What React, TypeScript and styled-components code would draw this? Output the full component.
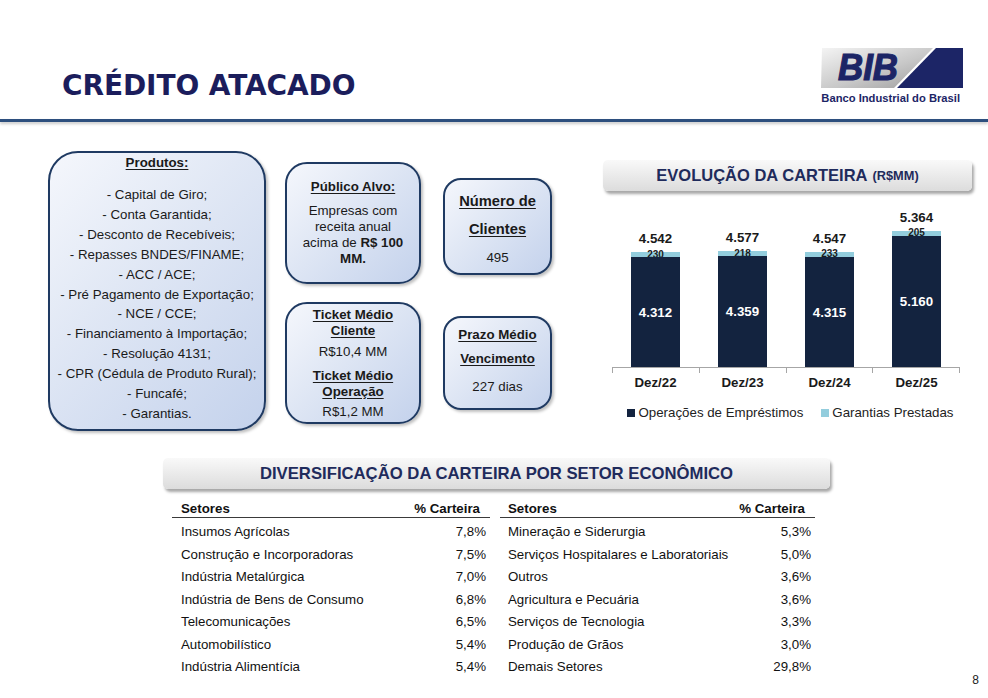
import React from 'react';
import styled, { createGlobalStyle } from 'styled-components';

const GlobalStyle = createGlobalStyle`
  html, body { margin: 0; padding: 0; background: #fff; }
  body { font-family: "Liberation Sans", Arial, sans-serif; color: #111; }
  * { box-sizing: border-box; }
`;

const NAVY = '#1c2566';
const BAR_DARK = '#13233f';
const BAR_LIGHT = '#93cddd';

const Page = styled.div`
  position: relative;
  width: 988px;
  height: 698px;
  overflow: hidden;
  background: #fff;
  display: flex;
  flex-direction: column;
  & > * {
    flex-shrink: 0;
  }
`;

const Header = styled.header`
  height: 119px;
  display: flex;
  align-items: flex-start;
  padding: 0 25px 0 62px;
`;

const Title = styled.h1`
  margin: 68px 0 0;
  font-family: "DejaVu Sans", Verdana, sans-serif;
  font-weight: 700;
  font-size: 28px;
  line-height: 36px;
  letter-spacing: -0.1px;
  color: #1b1d5c;
`;

const Logo = styled.div`
  margin: 48px 0 0 auto;
  width: 142px;
  display: flex;
  flex-direction: column;
  align-items: flex-end;
`;

const LogoTag = styled.div`
  margin-top: 4px;
  margin-right: 3px;
  font-size: 11.2px;
  line-height: 13px;
  font-weight: 700;
  color: ${NAVY};
  white-space: nowrap;
`;

const Divider = styled.div`
  height: 3px;
  background: #2d4f7e;
  box-shadow: 0 2px 3px rgba(0, 0, 0, 0.22);
`;

const MainRow = styled.section`
  display: flex;
  align-items: flex-start;
  padding: 29px 0 0 48px;
`;

const Card = styled.div<{ $w: number; $h: number; $r: number; $pb?: number }>`
  width: ${(p) => p.$w}px;
  height: ${(p) => p.$h}px;
  flex-shrink: 0;
  border-radius: ${(p) => p.$r}px;
  border: 2px solid #1f3a62;
  background: linear-gradient(135deg, #f5f7fc 0%, #e1e8f5 40%, #c4d2ec 100%);
  box-shadow: 2px 2px 3px rgba(0, 0, 0, 0.25);
  color: #1a1a1a;
  text-align: center;
  font-size: 13.3px;
  padding-bottom: ${(p) => p.$pb ?? 0}px;
`;

const ProductsCard = styled(Card)`
  padding-top: 2px;
`;

const CenterCard = styled(Card)`
  display: flex;
  flex-direction: column;
  justify-content: center;
  align-items: center;
`;

const Column = styled.div<{ $ml: number; $mt: number; $gap: number }>`
  display: flex;
  flex-direction: column;
  gap: ${(p) => p.$gap}px;
  margin-left: ${(p) => p.$ml}px;
  margin-top: ${(p) => p.$mt}px;
`;

const Heading = styled.div<{ $size?: number; $lh?: number; $mt?: number }>`
  font-weight: 700;
  text-decoration: underline;
  text-underline-offset: 2px;
  font-size: ${(p) => p.$size ?? 13.3}px;
  line-height: ${(p) => p.$lh ?? 16}px;
  margin-top: ${(p) => p.$mt ?? 0}px;
  white-space: nowrap;
`;

const Text = styled.div<{ $mt?: number; $lh?: number }>`
  font-size: 13.3px;
  line-height: ${(p) => p.$lh ?? 16}px;
  margin-top: ${(p) => p.$mt ?? 0}px;
  white-space: nowrap;
`;

const ProductList = styled.ul`
  list-style: none;
  margin: 14px 0 0;
  padding: 0;
  font-size: 13.3px;
  line-height: 19.9px;
  white-space: nowrap;
`;

const Chart = styled.div`
  width: 369px;
  margin: 9px 0 0 51px;
  display: flex;
  flex-direction: column;
`;

const GrayTitle = styled.div<{ $size: number }>`
  height: 31px;
  border-radius: 5px;
  background: linear-gradient(#f9f9f9, #dcdcdc);
  box-shadow: 2px 3px 3px rgba(0, 0, 0, 0.35);
  display: flex;
  align-items: center;
  justify-content: center;
  font-weight: 700;
  font-size: ${(p) => p.$size}px;
  color: #1f2b5c;
  white-space: nowrap;
`;

const Unit = styled.span`
  font-size: 12.8px;
  margin-left: 5px;
`;

const Plot = styled.div`
  height: 176px;
  width: 348px;
  margin-left: 9px;
  display: flex;
  align-items: flex-end;
`;

const BarSlot = styled.div`
  width: 87px;
  display: flex;
  flex-direction: column;
  align-items: center;
`;

const Total = styled.div`
  font-weight: 700;
  font-size: 13.3px;
  line-height: 15px;
  margin-bottom: 6px;
  color: #1a1a1a;
`;

const Segment = styled.div<{ $light?: boolean }>`
  width: 49px;
  display: flex;
  align-items: center;
  justify-content: center;
  font-weight: 700;
  background: ${(p) => (p.$light ? BAR_LIGHT : BAR_DARK)};
  color: ${(p) => (p.$light ? '#1a1a1a' : '#fff')};
  font-size: ${(p) => (p.$light ? 10 : 13.3)}px;
  line-height: ${(p) => (p.$light ? 10 : 15)}px;
`;

const Axis = styled.div`
  width: 348px;
  margin-left: 9px;
  display: flex;
  border-top: 1px solid #a6a6a6;
`;

const Tick = styled.div`
  flex: 1;
  height: 5px;
  border-left: 1px solid #a6a6a6;
  &:last-child {
    border-right: 1px solid #a6a6a6;
  }
`;

const Categories = styled.div`
  width: 348px;
  margin: 2px 0 0 9px;
  display: flex;
`;

const Category = styled.div`
  flex: 1;
  text-align: center;
  font-weight: 700;
  font-size: 13.3px;
  line-height: 15px;
  color: #1a1a1a;
`;

const Legend = styled.div`
  margin-top: 15px;
  padding-left: 6px;
  display: flex;
  justify-content: center;
  gap: 18px;
  font-size: 13.3px;
  line-height: 15px;
  color: #222;
`;

const LegendItem = styled.div`
  display: flex;
  align-items: center;
  gap: 3px;
  white-space: nowrap;
`;

const Swatch = styled.span<{ $c: string }>`
  width: 8px;
  height: 8px;
  background: ${(p) => p.$c};
`;

const SectionTitle = styled(GrayTitle)`
  width: 667px;
  margin: 27px 0 0 163px;
`;

const Tables = styled.div`
  display: flex;
  gap: 10px;
  margin: 11px 0 0 172px;
`;

const Table = styled.div<{ $w: number }>`
  width: ${(p) => p.$w}px;
  font-size: 13.3px;
  color: #111;
`;

const HeadRow = styled.div<{ $pl: number }>`
  display: flex;
  justify-content: space-between;
  padding: 1px 10px 1px ${(p) => p.$pl}px;
  line-height: 15px;
  font-weight: 700;
  border-bottom: 1.5px solid #3a3a3a;
`;

const Rows = styled.div`
  padding-top: 3px;
`;

const Row = styled.div<{ $pl: number }>`
  display: flex;
  justify-content: space-between;
  height: 22.5px;
  line-height: 22.5px;
  padding: 0 4px 0 ${(p) => p.$pl}px;
  white-space: nowrap;
`;

const PageNum = styled.div`
  position: absolute;
  right: 9px;
  bottom: 11px;
  font-size: 12px;
  line-height: 14px;
  color: #222;
`;

const products = [
  '- Capital de Giro;',
  '- Conta Garantida;',
  '- Desconto de Recebíveis;',
  '- Repasses BNDES/FINAME;',
  '- ACC / ACE;',
  '- Pré Pagamento de Exportação;',
  '- NCE / CCE;',
  '- Financiamento à Importação;',
  '- Resolução 4131;',
  '- CPR (Cédula de Produto Rural);',
  '- Funcafé;',
  '- Garantias.',
];

const bars = [
  { label: 'Dez/22', loans: 4312, guar: 230, total: '4.542' },
  { label: 'Dez/23', loans: 4359, guar: 218, total: '4.577' },
  { label: 'Dez/24', loans: 4315, guar: 233, total: '4.547' },
  { label: 'Dez/25', loans: 5160, guar: 205, total: '5.364' },
];

const fmt = (n: number) => n.toLocaleString('de-DE');
const SCALE = 0.0254;

const left = [
  ['Insumos Agrícolas', '7,8%'],
  ['Construção e Incorporadoras', '7,5%'],
  ['Indústria Metalúrgica', '7,0%'],
  ['Indústria de Bens de Consumo', '6,8%'],
  ['Telecomunicações', '6,5%'],
  ['Automobilístico', '5,4%'],
  ['Indústria Alimentícia', '5,4%'],
];

const right = [
  ['Mineração e Siderurgia', '5,3%'],
  ['Serviços Hospitalares e Laboratoriais', '5,0%'],
  ['Outros', '3,6%'],
  ['Agricultura e Pecuária', '3,6%'],
  ['Serviços de Tecnologia', '3,3%'],
  ['Produção de Grãos', '3,0%'],
  ['Demais Setores', '29,8%'],
];

const LogoMark = () => (
  <svg width="142" height="40" viewBox="0 0 142 40">
    <defs>
      <linearGradient id="bibSilver" x1="0" y1="0" x2="1" y2="1">
        <stop offset="0" stopColor="#f4f4f4" />
        <stop offset="0.55" stopColor="#c8c8c8" />
        <stop offset="1" stopColor="#9c9c9c" />
      </linearGradient>
    </defs>
    <polygon points="1,0 112,0 73,40 0,40" fill="url(#bibSilver)" />
    <polygon points="115,0 142,0 142,40 76,40" fill={NAVY} />
    <text
      x="17"
      y="32"
      fontFamily="Liberation Sans, Arial, sans-serif"
      fontWeight="700"
      fontStyle="italic"
      fontSize="37"
      fill={NAVY}
      stroke={NAVY}
      strokeWidth="1.2"
      textLength="60"
      lengthAdjust="spacingAndGlyphs"
    >
      BIB
    </text>
  </svg>
);

const SectorTable = ({ rows, w, pl }: { rows: string[][]; w: number; pl: number }) => (
  <Table $w={w}>
    <HeadRow $pl={pl}>
      <span>Setores</span>
      <span>% Carteira</span>
    </HeadRow>
    <Rows>
      {rows.map(([name, value]) => (
        <Row key={name} $pl={pl}>
          <span>{name}</span>
          <span>{value}</span>
        </Row>
      ))}
    </Rows>
  </Table>
);

export default function App() {
  return (
    <>
      <GlobalStyle />
      <Page>
        <Header>
          <Title>CRÉDITO ATACADO</Title>
          <Logo>
            <LogoMark />
            <LogoTag>Banco Industrial do Brasil</LogoTag>
          </Logo>
        </Header>
        <Divider />

        <MainRow>
          <ProductsCard $w={218} $h={280} $r={30}>
            <Heading>Produtos:</Heading>
            <ProductList>
              {products.map((p) => (
                <li key={p}>{p}</li>
              ))}
            </ProductList>
          </ProductsCard>

          <Column $ml={19} $mt={11} $gap={18}>
            <CenterCard $w={136} $h={122} $r={22}>
              <Heading>Público Alvo:</Heading>
              <Text $mt={8}>
                Empresas com
                <br />
                receita anual
                <br />
                acima de <b>R$ 100</b>
                <br />
                <b>MM.</b>
              </Text>
            </CenterCard>
            <CenterCard $w={136} $h={122} $r={22}>
              <Heading>
                Ticket Médio
                <br />
                Cliente
              </Heading>
              <Text $mt={5}>R$10,4 MM</Text>
              <Heading $mt={8}>
                Ticket Médio
                <br />
                Operação
              </Heading>
              <Text $mt={4}>R$1,2 MM</Text>
            </CenterCard>
          </Column>

          <Column $ml={22} $mt={27} $gap={41}>
            <CenterCard $w={109} $h={97} $r={18}>
              <Heading $size={14.7} $lh={28}>
                Número de
                <br />
                Clientes
              </Heading>
              <Text $mt={7}>495</Text>
            </CenterCard>
            <CenterCard $w={109} $h={94} $r={18} $pb={8}>
              <Heading $lh={24}>
                Prazo Médio
                <br />
                Vencimento
              </Heading>
              <Text $mt={8}>227 dias</Text>
            </CenterCard>
          </Column>

          <Chart>
            <GrayTitle $size={16.5}>
              EVOLUÇÃO DA CARTEIRA<Unit>(R$MM)</Unit>
            </GrayTitle>
            <Plot>
              {bars.map((b) => (
                <BarSlot key={b.label}>
                  <Total>{b.total}</Total>
                  <Segment $light style={{ height: b.guar * SCALE }}>
                    {b.guar}
                  </Segment>
                  <Segment style={{ height: b.loans * SCALE }}>{fmt(b.loans)}</Segment>
                </BarSlot>
              ))}
            </Plot>
            <Axis>
              {bars.map((b) => (
                <Tick key={b.label} />
              ))}
            </Axis>
            <Categories>
              {bars.map((b) => (
                <Category key={b.label}>{b.label}</Category>
              ))}
            </Categories>
            <Legend>
              <LegendItem>
                <Swatch $c={BAR_DARK} />
                Operações de Empréstimos
              </LegendItem>
              <LegendItem>
                <Swatch $c={BAR_LIGHT} />
                Garantias Prestadas
              </LegendItem>
            </Legend>
          </Chart>
        </MainRow>

        <SectionTitle $size={16.7}>DIVERSIFICAÇÃO DA CARTEIRA POR SETOR ECONÔMICO</SectionTitle>
        <Tables>
          <SectorTable rows={left} w={318} pl={9} />
          <SectorTable rows={right} w={315} pl={8} />
        </Tables>

        <PageNum>8</PageNum>
      </Page>
    </>
  );
}
